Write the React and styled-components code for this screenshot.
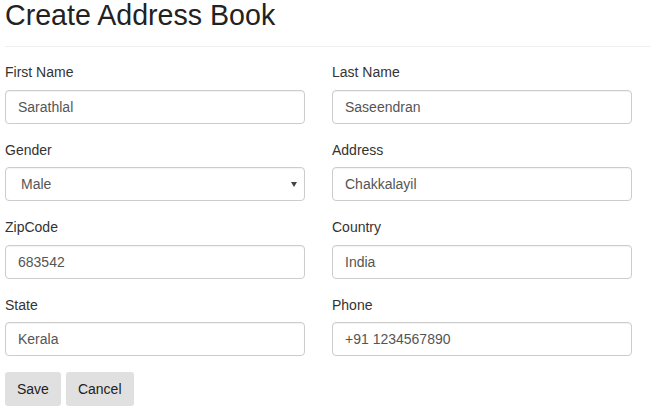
import React from "react";
import styled, { createGlobalStyle } from "styled-components";

const Global = createGlobalStyle`
  * { box-sizing: border-box; }
  html, body { margin: 0; padding: 0; background: #fff; }
  body { font-family: "Liberation Sans", Arial, sans-serif; font-size: 14px; color: #333; }
`;

const Page = styled.div`
  padding: 0 0 0 5px;
`;

const Title = styled.h2`
  margin: 0;
  font-size: 28.6px;
  line-height: 30px;
  font-weight: 400;
  color: #222;
`;

const Rule = styled.hr`
  margin: 15.5px 0 0 0;
  border: 0;
  border-top: 1px solid #eee;
  height: 0;
`;

const Grid = styled.div`
  display: grid;
  grid-template-columns: 300px 300px;
  column-gap: 27px;
  margin-top: 15.5px;
`;

const Group = styled.div`
  display: flex;
  flex-direction: column;
  margin-bottom: 16px;
`;

const Label = styled.label`
  display: block;
  font-size: 14px;
  line-height: 20px;
  color: #333;
  margin-bottom: 7.5px;
`;

const Input = styled.input`
  height: 34px;
  width: 100%;
  padding: 6px 12px;
  font-family: inherit;
  font-size: 14px;
  color: #555;
  background: #fff;
  border: 1px solid #ccc;
  border-radius: 4px;
  box-shadow: inset 0 1px 1px rgba(0, 0, 0, 0.05);
  outline: none;
`;

const SelectWrap = styled.div`
  position: relative;
  height: 34px;
`;

const Select = styled.select`
  appearance: none;
  -webkit-appearance: none;
  height: 34px;
  width: 100%;
  padding: 6px 12px 6px 15px;
  font-family: inherit;
  font-size: 14px;
  color: #555;
  background: #fff;
  border: 1px solid #ccc;
  border-radius: 4px;
  box-shadow: inset 0 1px 1px rgba(0, 0, 0, 0.05);
  outline: none;
`;

const Caret = styled.span`
  position: absolute;
  right: 8px;
  top: 15px;
  width: 0;
  height: 0;
  border-left: 3px solid transparent;
  border-right: 3px solid transparent;
  border-top: 5px solid #444;
  pointer-events: none;
`;

const Actions = styled.div`
  display: flex;
  gap: 5px;
`;

const Button = styled.button`
  height: 34px;
  padding: 0 ${(p) => p.$pad}px;
  font-family: inherit;
  font-size: 14px;
  color: #222;
  background: #e0e0e0;
  border: none;
  border-radius: 3px;
`;

const fields = [
  ["First Name", "Sarathlal"],
  ["Last Name", "Saseendran"],
  ["Gender", "Male", true],
  ["Address", "Chakkalayil"],
  ["ZipCode", "683542"],
  ["Country", "India"],
  ["State", "Kerala"],
  ["Phone", "+91 1234567890"],
];

export default function App() {
  return (
    <Page>
      <Global />
      <Title>Create Address Book</Title>
      <Rule />
      <Grid>
        {fields.map(([label, value, isSelect]) => (
          <Group key={label}>
            <Label>{label}</Label>
            {isSelect ? (
              <SelectWrap>
                <Select defaultValue={value}>
                  <option>Male</option>
                  <option>Female</option>
                </Select>
                <Caret />
              </SelectWrap>
            ) : (
              <Input defaultValue={value} />
            )}
          </Group>
        ))}
      </Grid>
      <Actions>
        <Button $pad={12}>Save</Button>
        <Button $pad={12}>Cancel</Button>
      </Actions>
    </Page>
  );
}
